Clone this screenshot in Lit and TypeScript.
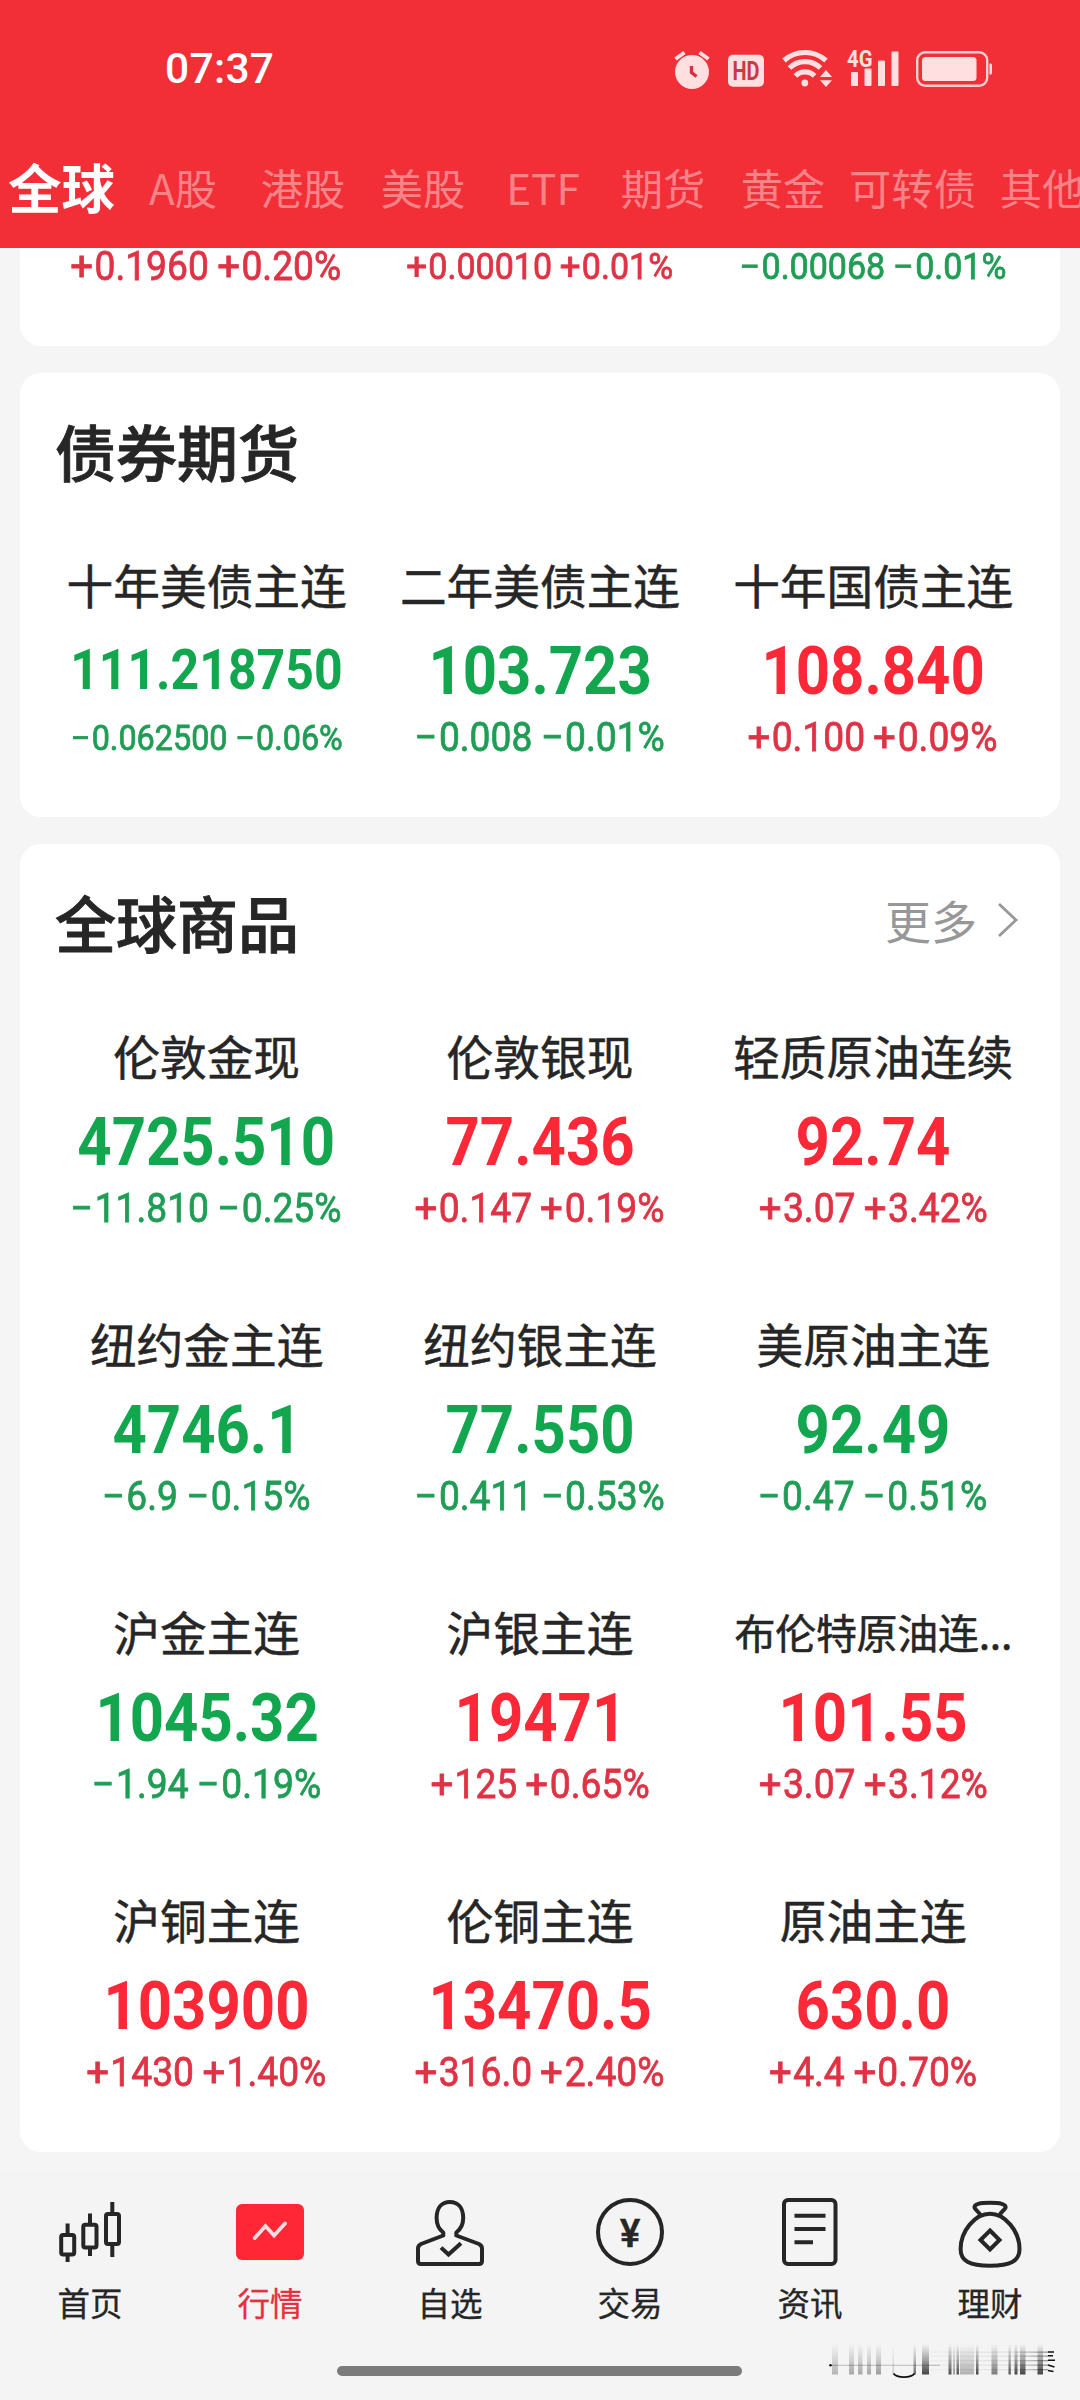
import { LitElement, html, css, svg } from "lit";
import { customElement, property } from "lit/decorators.js";
import { classMap } from "lit/directives/class-map.js";

type Size = "" | "sm" | "md";
interface Quote {
  name: string;
  price: string;
  change: string;
  dir: "up" | "down";
  priceSize?: Size;
  changeSize?: Size;
  smallName?: boolean;
}

const q = (name: string, price: string, change: string, extra: Partial<Quote> = {}): Quote => ({
  name,
  price,
  change,
  dir: change.startsWith("+") ? "up" : "down",
  ...extra,
});

const FX: Quote[] = [
  q("", "", "+0.1960 +0.20%"),
  q("", "", "+0.00010 +0.01%", { changeSize: "md" }),
  q("", "", "−0.00068 −0.01%", { changeSize: "md" }),
];

const BONDS: Quote[] = [
  q("十年美债主连", "111.218750", "−0.062500 −0.06%", { priceSize: "sm", changeSize: "sm" }),
  q("二年美债主连", "103.723", "−0.008 −0.01%"),
  q("十年国债主连", "108.840", "+0.100 +0.09%"),
];

const GOODS: Quote[] = [
  q("伦敦金现", "4725.510", "−11.810 −0.25%"),
  q("伦敦银现", "77.436", "+0.147 +0.19%"),
  q("轻质原油连续", "92.74", "+3.07 +3.42%"),
  q("纽约金主连", "4746.1", "−6.9 −0.15%"),
  q("纽约银主连", "77.550", "−0.411 −0.53%"),
  q("美原油主连", "92.49", "−0.47 −0.51%"),
  q("沪金主连", "1045.32", "−1.94 −0.19%"),
  q("沪银主连", "19471", "+125 +0.65%"),
  q("布伦特原油连...", "101.55", "+3.07 +3.12%", { smallName: true }),
  q("沪铜主连", "103900", "+1430 +1.40%"),
  q("伦铜主连", "13470.5", "+316.0 +2.40%"),
  q("原油主连", "630.0", "+4.4 +0.70%"),
];

@customElement("status-bar")
class StatusBar extends LitElement {
  static styles = css`
    :host {
      display: flex;
      justify-content: space-between;
      align-items: center;
      height: 60px;
      padding: 40px 70px 0 165px;
      color: #fff;
    }
    .time {
      font: 500 42.5px/60px Roboto, sans-serif;
      letter-spacing: 0.3px;
      margin-top: -2px;
    }
    svg {
      display: block;
    }
    text {
      font-family: Roboto, sans-serif;
      font-weight: 700;
    }
  `;
  render() {
    return html`
      <span class="time">07:37</span>
      <svg width="350" height="60" viewBox="0 0 350 60" fill="#ffdfdf">
        <circle cx="32" cy="32" r="17" />
        <path d="M15.5 19 24.5 12.5M48.5 19 39.5 12.5" stroke="#ffdfdf" stroke-width="4" />
        <path d="M31.5 26V32.5L36.5 36.5" fill="none" stroke="#d8303c" stroke-width="3.4" />
        <rect x="68" y="14.7" width="36" height="32" rx="5" />
        <text x="86" y="39.5" font-size="25" text-anchor="middle" textLength="27" lengthAdjust="spacingAndGlyphs" fill="#c83a44">HD</text>
        <g fill="none" stroke="#ffdfdf" stroke-width="5.2">
          <path d="M124 20.5A31.5 31.5 0 0 1 166 20.5" />
          <path d="M129.5 28A22 22 0 0 1 160.5 28" />
          <path d="M135.5 36A13 13 0 0 1 154.5 36" />
        </g>
        <circle cx="144.8" cy="43" r="3.4" />
        <path d="M160 37 166 30 172 37ZM160 40.3 166 47 172 40.3Z" />
        <text x="187" y="26.5" font-size="23" textLength="25.5" lengthAdjust="spacingAndGlyphs">4G</text>
        <rect x="191" y="32" width="7" height="14" rx="1" />
        <rect x="204.5" y="28.5" width="7" height="17.5" rx="1" />
        <rect x="218" y="20.5" width="7" height="25.5" rx="1" />
        <rect x="231.5" y="11.5" width="7" height="34.5" rx="1" />
        <rect x="257.2" y="12.2" width="70" height="33.6" rx="8" fill="none" stroke="#ffcfd1" stroke-width="2.4" />
        <rect x="262" y="17" width="54.5" height="24" rx="3.5" />
        <path d="M329.5 23.5h1q1.5 0 1.5 1.5v8q0 1.5-1.5 1.5h-1z" />
      </svg>
    `;
  }
}

@customElement("market-tabs")
class MarketTabs extends LitElement {
  static styles = css`
    :host {
      display: flex;
      height: 148px;
      padding-top: 0;
      box-sizing: border-box;
      overflow: hidden;
      white-space: nowrap;
    }
    .tab {
      flex: none;
      width: 120px;
      text-align: center;
      font-size: 42.3px;
      line-height: 60px;
      padding-top: 57px;
      color: rgba(255, 255, 255, 0.42);
    }
    .active {
      width: 123px;
      font-size: 53.5px;
      font-weight: 700;
      color: #fff;
      padding-top: 56px;
    }
    .wide {
      width: 139px;
    }
  `;
  render() {
    return ["全球", "A股", "港股", "美股", "ETF", "期货", "黄金", "可转债", "其他"].map(
      (t, i) => html`<div class=${classMap({ tab: true, active: i === 0, wide: t === "可转债" })}>${t}</div>`
    );
  }
}

@customElement("quote-cell")
class QuoteCell extends LitElement {
  @property({ attribute: false }) quote!: Quote;
  static styles = css`
    :host {
      display: flex;
      flex-direction: column;
      align-items: center;
      white-space: nowrap;
    }
    .name {
      height: 64px;
      margin-top: 23px;
      font-size: 46.7px;
      line-height: 64px;
      color: #262626;
      -webkit-text-stroke: 0.5px currentColor;
    }
    .name.small {
      font-size: 41px;
      letter-spacing: -0.3px;
    }
    .price,
    .change {
      font-family: Roboto, sans-serif;
    }
    .price {
      height: 72px;
      margin-top: 19px;
      font-size: 66.5px;
      font-weight: 700;
      line-height: 72px;
      transform: scaleX(0.9);
    }
    .price.sm {
      font-size: 55.5px;
    }
    .change {
      height: 40px;
      margin-top: 11px;
      font-size: 40px;
      font-weight: 400;
      line-height: 40px;
      transform: scaleX(0.93);
      -webkit-text-stroke: 0.8px currentColor;
    }
    .sign {
      display: inline-block;
      transform: scaleX(1.08);
      margin-right: 0.06em;
    }
    .change.md {
      font-size: 36.6px;
    }
    .change.sm {
      font-size: 34.8px;
    }
    .price.up {
      color: #fb2838;
    }
    .price.down {
      color: #12a64f;
    }
    .change.up {
      color: #df3345;
    }
    .change.down {
      color: #1f9d55;
    }
  `;
  render() {
    const { name, price, change, dir, priceSize = "", changeSize = "", smallName } = this.quote;
    const [abs, pct] = change.split(" ");
    return html`
      <div class=${classMap({ name: true, small: !!smallName })}>${name}</div>
      <div class="price ${dir} ${priceSize}">${price}</div>
      <div class="change ${dir} ${changeSize}"><span class="sign">${abs[0]}</span>${abs.slice(1)} <span class="sign">${pct[0]}</span>${pct.slice(1)}</div>
    `;
  }
}

@customElement("quote-card")
class QuoteCard extends LitElement {
  @property() heading = "";
  @property({ type: Boolean }) more = false;
  @property({ attribute: false }) quotes: Quote[] = [];
  static styles = css`
    :host {
      display: block;
      flex: none;
      background: #fff;
      border-radius: 21px;
      padding: 0 20px;
    }
    .head {
      display: flex;
      justify-content: space-between;
      align-items: center;
      height: 156px;
      padding: 0 21px 0 15px;
    }
    .title {
      font-size: 61px;
      font-weight: 500;
      line-height: 80px;
      color: #262626;
      -webkit-text-stroke: 0.9px currentColor;
    }
    .more {
      display: flex;
      align-items: center;
      gap: 20px;
      font-size: 46px;
      line-height: 60px;
      color: #979797;
      padding-bottom: 7px;
    }
    .more svg {
      display: block;
      margin-top: 2px;
    }
    .grid {
      display: grid;
      grid-template-columns: repeat(3, 333.3px);
      grid-auto-rows: 288px;
    }
  `;
  render() {
    return html`
      ${this.heading
        ? html`<div class="head">
            <span class="title">${this.heading}</span>
            ${this.more
              ? html`<span class="more"
                  >更多<svg width="22" height="38" viewBox="0 0 22 38">
                    <path d="M2 3 19 19 2 35" fill="none" stroke="#979797" stroke-width="2.8" />
                  </svg></span>`
              : ""}
          </div>`
        : ""}
      <div class="grid">${this.quotes.map((x) => html`<quote-cell .quote=${x}></quote-cell>`)}</div>
    `;
  }
}

const ICONS = {
  home: svg`<g fill="none" stroke="#262626" stroke-width="4">
    <rect x="11.2" y="43" width="13" height="19.5" rx="2"/><path d="M17.6 31.5V43M17.6 63V70"/>
    <rect x="33.3" y="32.8" width="13.2" height="22.7" rx="2"/><path d="M40 21.5V32M40 56V64"/>
    <rect x="56" y="22" width="13" height="30" rx="2"/><path d="M62.3 10V22M62.3 52V65"/></g>`,
  market: svg`<rect x="6" y="12" width="68" height="56" rx="6" fill="#ff2636"/>
    <path d="M24.8 46 35.5 34 44.1 43.5 55 31.5" fill="none" stroke="#ffdcdf" stroke-width="3.8" stroke-linecap="round"/>`,
  watch: svg`<g fill="none" stroke="#262626" stroke-width="4" stroke-linejoin="round" stroke-linecap="round">
    <path d="M33.3 43.5V40.5C28.5 37 26.6 32 26.6 26C26.6 15.5 32 10 39.9 10S53.2 15.5 53.2 26C53.2 32 51 37 46.3 40.5V43.5L69 52Q72 53.5 72 56.5V69Q72 72 69 72H11Q8 72 8 69V56.5Q8 53.5 11 52Z"/>
    <path d="M32.5 57 38.5 62.5 49.5 52.5" stroke-linecap="square" stroke-linejoin="miter"/></g>`,
  trade: svg`<circle cx="40" cy="40" r="32" fill="none" stroke="#262626" stroke-width="4"/>
    <text x="40" y="54.5" font-size="38" font-weight="500" font-family="Roboto, sans-serif" text-anchor="middle" stroke="#262626" stroke-width="0.6" fill="#262626">¥</text>`,
  news: svg`<g fill="none" stroke="#262626" stroke-width="4"><rect x="14" y="8" width="51.5" height="64" rx="4"/>
    <path d="M24.5 23.7H55.5M24.5 37H55.5M24.5 50.2H43"/></g>`,
  wealth: svg`<g fill="none" stroke="#262626" stroke-width="4" stroke-linejoin="round">
    <path d="M40 21.7C55 21.7 69.5 39 69.5 57C69.5 69.5 60 73.7 40 73.7S10.6 69.5 10.6 57C10.6 39 25 21.7 40 21.7Z"/>
    <path d="M30.5 23.5C29.5 20 25.5 18.5 24.5 15.5C24 12 30 10.8 40 10.8S56 12 55.6 15.5C54.5 18.5 50.5 20 49.5 23.5"/>
    <path d="M40 38.5 49.5 48 40 57.5 30.5 48Z" stroke-linejoin="miter"/></g>`,
};

@customElement("bottom-nav")
class BottomNav extends LitElement {
  static styles = css`
    :host {
      display: grid;
      grid-template-columns: repeat(6, 180px);
      height: 229px;
      background: #f4f4f4;
      position: relative;
    }
    .item {
      display: flex;
      flex-direction: column;
      align-items: center;
      padding-top: 21px;
      font-size: 32.5px;
      line-height: 44px;
      color: #262626;
    }
    .item span {
      margin-top: 8px;
      -webkit-text-stroke: 0.3px currentColor;
    }
    .active {
      color: #e5303f;
    }
    svg {
      display: block;
    }
    .pill {
      position: absolute;
      left: 337px;
      top: 195px;
      width: 405px;
      height: 10px;
      border-radius: 5px;
      background: #7b7b7b;
    }
    .smear {
      position: absolute;
      left: 820px;
      top: 164px;
    }
  `;
  render() {
    const items: [keyof typeof ICONS, string][] = [
      ["home", "首页"],
      ["market", "行情"],
      ["watch", "自选"],
      ["trade", "交易"],
      ["news", "资讯"],
      ["wealth", "理财"],
    ];
    // x, width, opacity of each vertical streak
    const streaks = [
      [12, 6, 0.3], [29, 5, 0.35], [38, 4.5, 0.35], [47, 4, 0.35], [56, 5, 0.4], [72.5, 1.5, 0.2],
      [93.5, 2.5, 0.6], [102, 7, 0.8], [128.5, 3, 0.75], [133, 2, 0.4], [136.5, 2.5, 0.75],
      [140, 14, 0.3], [156, 2.5, 0.8], [171.5, 6, 0.55], [188.5, 2.3, 0.75],
      [194.5, 3, 0.8], [200, 5.5, 0.8], [217.5, 5.5, 0.8],
    ];
    return html`
      ${items.map(
        ([k, label]) => html`<div class=${classMap({ item: true, active: k === "market" })}>
          <svg width="80" height="80" viewBox="0 0 80 80">${ICONS[k]}</svg><span>${label}</span>
        </div>`
      )}
      <div class="pill"></div>
      <svg class="smear" width="240" height="50" viewBox="0 0 240 50">
        <defs>
          <linearGradient id="v" x1="0" y1="0" x2="0" y2="1">
            <stop offset="0" stop-color="#000" stop-opacity="0" />
            <stop offset="0.5" stop-color="#000" stop-opacity="0.4" />
            <stop offset="1" stop-color="#000" stop-opacity="0.9" />
          </linearGradient>
          <linearGradient id="h" x1="0" y1="0" x2="1" y2="0">
            <stop offset="0" stop-color="#000" stop-opacity="0.03" />
            <stop offset="0.7" stop-color="#000" stop-opacity="0.08" />
            <stop offset="1" stop-color="#000" stop-opacity="0.4" />
          </linearGradient>
          <filter id="b"><feGaussianBlur stdDeviation="0.7 0.2" /></filter>
        </defs>
        <g filter="url(#b)">
          ${streaks.map(([x, w, o]) => svg`<rect x=${x} y="9" width=${w} height="30.5" fill="url(#v)" opacity=${o}/>`)}
        </g>
        ${[16.5, 20.5, 25, 29.5, 34].map((y) => svg`<rect x="110" y=${y} width="118" height="1.3" fill="url(#h)"/>`)}
        <rect x="10" y="29.7" width="110" height="1.2" fill="#000" opacity="0.2" />
        <circle cx="10.5" cy="30.3" r="1.2" />
        <path d="M73.5 38.5C77 43.2 91 43.2 94.5 38.5" fill="none" stroke="#111" stroke-width="1.8" />
        <path d="M228 17H234M228 20.7H233M228 25.3H235M228 30 234.5 32M228 35.5 233.5 36.5" stroke="#111" stroke-width="1.4" />
      </svg>
    `;
  }
}

@customElement("app-root")
class AppRoot extends LitElement {
  static styles = css`
    :host {
      display: flex;
      flex-direction: column;
      width: 1080px;
      height: 2400px;
      overflow: hidden;
      background: #f5f5f5;
      font-family: "Noto Sans CJK SC", sans-serif;
    }
    .top {
      flex: none;
      height: 248px;
      background: #f22f37;
      z-index: 1;
    }
    .feed {
      flex: 1;
      min-height: 0;
      overflow: hidden;
      display: flex;
      flex-direction: column;
      justify-content: flex-end;
      gap: 27px;
      padding: 0 20px 19px;
    }
    bottom-nav {
      flex: none;
    }
  `;
  render() {
    return html`
      <div class="top"><status-bar></status-bar><market-tabs></market-tabs></div>
      <div class="feed">
        <quote-card .quotes=${FX}></quote-card>
        <quote-card heading="债券期货" .quotes=${BONDS}></quote-card>
        <quote-card heading="全球商品" more .quotes=${GOODS}></quote-card>
      </div>
      <bottom-nav></bottom-nav>
    `;
  }
}
